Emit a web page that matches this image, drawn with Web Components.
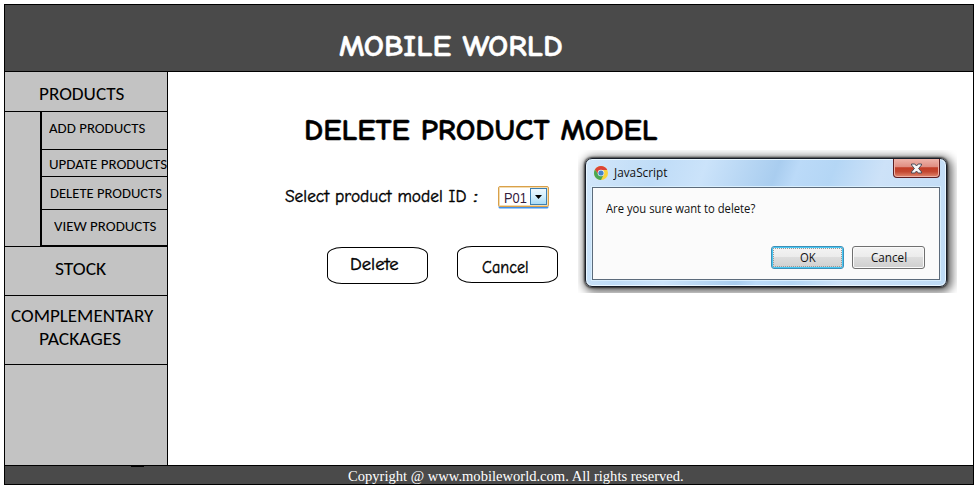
<!DOCTYPE html>
<html lang="en">
<head>
<meta charset="utf-8">
<title>Mobile World</title>
<style>
  html, body { margin: 0; background: #fff; }
  body { width: 978px; height: 491px; overflow: hidden; }
</style>
</head>
<body>
<mobile-world-page></mobile-world-page>
<script>
function define(name, html, setup) {
  const tpl = document.createElement('template');
  tpl.innerHTML = html;
  customElements.define(name, class extends HTMLElement {
    constructor() {
      super();
      this.attachShadow({ mode: 'open' }).append(tpl.content.cloneNode(true));
    }
    connectedCallback() { if (setup) setup(this); }
  });
}

/* One line of text fitted to a given width; the bottom of the box is the baseline. */
define('fit-text', `
<style>
  :host { display: block; flex: none; height: 20px; line-height: 0; white-space: nowrap; }
  i { display: inline-block; height: 20px; width: 0; }
  span { display: inline-block; line-height: 0; transform-origin: 0 0; }
</style><i></i><span><slot></slot></span>`, el => {
  const w = +el.getAttribute('w');
  el.style.width = w + 'px';
  el.style.fontSize = el.getAttribute('size') + 'px';
  const span = el.shadowRoot.querySelector('span');
  requestAnimationFrame(() => {
    span.style.transform = 'scaleX(' + w / span.offsetWidth + ')';
  });
});

define('site-header', `
<style>
  :host { display: block; box-sizing: border-box; height: 67px; background: #4a4a4a; border-bottom: 1px solid #000;
    padding: 31px 0 0 334px; color: #fff; font-family: "Comic Sans MS", "Comic Neue", "Noto Sans", sans-serif; font-weight: 700; -webkit-text-stroke: .5px; }
</style><fit-text w="224" size="30.5">MOBILE WORLD</fit-text>`);

define('menu-cell', `
<style>
  :host { display: flow-root; box-sizing: border-box; border-bottom: 1px solid #000; }
</style><slot></slot>`);

define('side-menu', `
<style>
  :host { display: flex; flex-direction: column; box-sizing: border-box; width: 163px; background: #c3c3c3;
    border-right: 1px solid #000; color: #000; font-family: Calibri, Carlito, Lato, sans-serif; }
  .products { height: 40px; padding: 8px 0 0 34px; }
  .sub { display: flex; height: 135px; box-sizing: border-box; border-bottom: 1px solid #000; }
  .gap { width: 36px; }
  .list { flex: 1; border-left: 2px solid #000; margin: -1px 0 -1px; }
  .list menu-cell { padding-left: 7px; }
  .a { height: 39px; padding-top: 2px; }
  .u { height: 27px; }
  .d { height: 33px; padding-top: 1px; }
  .v { height: 37px; padding-top: 1px; border-bottom-width: 2px; }
  .stock { height: 49px; padding: 8px 0 0 50px; }
  .comp { height: 69px; padding: 6px 0 0 6px; }
</style>
<menu-cell class="products"><fit-text w="85" size="17.6">PRODUCTS</fit-text></menu-cell>
<div class="sub"><div class="gap"></div><div class="list">
  <menu-cell class="a"><fit-text w="96" size="13.3">ADD PRODUCTS</fit-text></menu-cell>
  <menu-cell class="u"><fit-text w="118" size="13.3" style="margin-top:-1px">UPDATE PRODUCTS</fit-text></menu-cell>
  <menu-cell class="d"><fit-text w="112" size="13.3" style="margin-left:1px">DELETE PRODUCTS</fit-text></menu-cell>
  <menu-cell class="v"><fit-text w="102" size="13.3" style="margin-left:5px">VIEW PRODUCTS</fit-text></menu-cell>
</div></div>
<menu-cell class="stock"><fit-text w="51" size="17.6">STOCK</fit-text></menu-cell>
<menu-cell class="comp"><fit-text w="142" size="17.6">COMPLEMENTARY</fit-text><fit-text w="82" size="17.6" style="margin:3px 0 0 28px">PACKAGES</fit-text></menu-cell>`);

define('sketch-button', `
<style>
  :host { display: block; box-sizing: border-box; width: 101px; height: 37px; border: 1px solid #000; border-radius: 15px / 8px; }
</style><slot></slot>`);

define('model-select', `
<style>
  :host { display: flex; box-sizing: border-box; width: 51px; height: 21px; border: 1px solid #d9a04a; border-radius: 2px;
    box-shadow: inset 0 0 0 1px #f3dcb0, 0 2px 0 -.5px #3f91ec; padding: 1px; font-family: "Liberation Sans", Arial, sans-serif; color: #35203c; }
  fit-text { margin: -5px 0 0 4px; }
  b { display: flex; align-items: center; justify-content: center; box-sizing: border-box; width: 17px; height: 17px; margin-left: auto;
    border: 1px solid #3c7fb1; background: linear-gradient(#eef8fe, #d3effc 50%, #a8daf5); }
</style><fit-text w="23" size="14">P01</fit-text><b><svg width="7" height="4"><path d="M0 0h7L3.5 4z"/></svg></b>`);

define('delete-form', `
<style>
  :host { display: block; color: #000; font-family: "Comic Sans MS", "Comic Neue", "Noto Sans", sans-serif; }
  .title { padding: 48px 0 0 136px; font-weight: 700; -webkit-text-stroke: .5px; }
  .row { display: flex; height: 22px; margin: 46px 0 0 117px; font-weight: 400; }
  .row > fit-text, sketch-button { -webkit-text-stroke: .4px; }
  .row > fit-text { margin-top: -4px; }
  model-select { margin-left: 20px; }
  .buttons { display: flex; gap: 29px; margin: 38px 0 0 159px; font-weight: 400; }
</style>
<div class="title"><fit-text w="354" size="30.5">DELETE PRODUCT MODEL</fit-text></div>
<div class="row"><fit-text w="181" size="17.5">Select product model ID</fit-text><fit-text w="5" size="17.5" style="margin-left:7px">:</fit-text><model-select></model-select></div>
<div class="buttons">
  <sketch-button style="margin-top:1px"><fit-text w="49" size="17.5" style="margin:2px 0 0 22px">Delete</fit-text></sketch-button>
  <sketch-button><fit-text w="47" size="17.5" style="margin:6px 0 0 24px">Cancel</fit-text></sketch-button>
</div>`);

define('dialog-button', `
<style>
  :host { display: flex; box-sizing: border-box; width: 73px; height: 23px; justify-content: center; border: 1px solid #707070; border-radius: 3px;
    background: linear-gradient(#f4f4f4, #ebebeb 50%, #dddddd 50%, #cfcfcf); box-shadow: inset 0 0 0 1px #fafafa; }
  :host([focused]) { border-color: #3c8fb8; box-shadow: inset 0 0 0 1px #48c8f4; padding: 1px; }
  div { display: flex; justify-content: center; flex: 1; }
  :host([focused]) div { border: 1px dotted #999; }
</style><div><slot></slot></div>`);

define('close-button', `
<style>
  :host { display: flex; box-sizing: border-box; width: 47px; height: 19px; align-items: center; justify-content: center;
    border: 1px solid #5c1e22; border-top: 0; border-radius: 0 0 4px 4px; box-shadow: inset 0 0 0 1px #eeb0a5;
    background: linear-gradient(#eeb4aa, #df8c80 45%, #c23d27 48%, #c34730 70%, #e18970); }
</style><svg width="13" height="11" viewBox="0 0 13 11"><path d="M1.5 1h3.3l1.7 2 1.7-2h3.3v1L8.6 5.5l2.9 3.4V10H8.2L6.5 8l-1.7 2H1.5V8.9l2.9-3.4L1.5 2z" fill="#f7f7f7" stroke="#4b4c58" stroke-width="1"/></svg>`);

define('chrome-icon', `
<style>:host { display: block; width: 14px; height: 14px; } svg { display: block; }</style>
<svg width="14" height="14" viewBox="0 0 14 14">
<circle cx="7" cy="7" r="7" fill="#f8d33b"/>
<path d="M.94 3.5A7 7 0 0 1 13.06 3.5L13.1 4H7L4.4 8.5z" fill="#dc4437"/>
<path d="M.94 3.5A7 7 0 0 0 7 14l2.7-5.4L7 10 4.4 8.5z" fill="#4aa754"/>
<circle cx="7" cy="7" r="3.3" fill="#eef4f8"/><circle cx="7" cy="7" r="2.6" fill="#4383c9"/></svg>`);

define('confirm-dialog', `
<style>
  :host { display: block; box-sizing: border-box; width: 379px; height: 143px; padding: 8px 10px 6px 7px; overflow: hidden;
    font-family: "Segoe UI", "Open Sans", sans-serif; color: #111; }
  .win { box-sizing: border-box; width: 362px; height: 129px; border: 1px solid #171d28; border-radius: 7px; padding: 0 6px;
    background: linear-gradient(110deg, #d3e7fa 0, #bfdcf7 18%, #cbe3fa 30%, #a9cdef 48%, #bbdaf8 53%, #b4d6f5 62%, #cde2f8 74%, #bedbf6 100%);
    box-shadow: inset 0 0 0 1px #e9f6ff, 0 0 2px 1px rgba(0,0,0,.65), 2px 2px 10px 3px rgba(0,0,0,.62); }
  .bar { display: flex; height: 28px; }
  chrome-icon { margin: 7px 0 0 2px; }
  .bar fit-text { margin: -2px 0 0 6px; }
  close-button { margin-left: auto; }
  .body { box-sizing: border-box; width: 348px; height: 93px; background: #fbfbfb; border: 1px solid #5c6b7b; box-shadow: 0 0 0 1px #d9effe; }
  .msg { padding: 5px 0 0 13px; }
  .acts { display: flex; gap: 8px; justify-content: flex-end; padding: 33px 14px 0 0; }
</style>
<div class="win">
  <div class="bar"><chrome-icon></chrome-icon><fit-text w="53" size="12">JavaScript</fit-text><close-button></close-button></div>
  <div class="body">
    <div class="msg"><fit-text w="149" size="12">Are you sure want to delete?</fit-text></div>
    <div class="acts"><dialog-button focused><fit-text w="16" size="12" style="margin-top:-7px">OK</fit-text></dialog-button><dialog-button><fit-text w="36" size="12" style="margin-top:-5px">Cancel</fit-text></dialog-button></div>
  </div>
</div>`);

define('site-footer', `
<style>
  :host { display: block; box-sizing: border-box; height: 19px; background: linear-gradient(#000, #000) 126px 0 / 13px 1px no-repeat #4a4a4a; border-top: 1px solid #000;
    padding-left: 343px; color: #fff; font-family: "Liberation Serif", "Times New Roman", serif; }
  fit-text { margin-top: -5px; }
</style><fit-text w="336" size="15">Copyright @ www.mobileworld.com. All rights reserved.</fit-text>`);

define('mobile-world-page', `
<style>
  :host { display: flex; flex-direction: column; box-sizing: border-box; width: 970px; height: 481px; margin: 4px; border: 1px solid #000; position: relative; }
  .mid { display: flex; height: 393px; }
  delete-form { flex: 1; }
  confirm-dialog { position: absolute; left: 573px; top: 145px; }
</style>
<site-header></site-header>
<div class="mid"><side-menu></side-menu><delete-form></delete-form></div>
<site-footer></site-footer>
<confirm-dialog></confirm-dialog>`);
</script>
</body>
</html>
